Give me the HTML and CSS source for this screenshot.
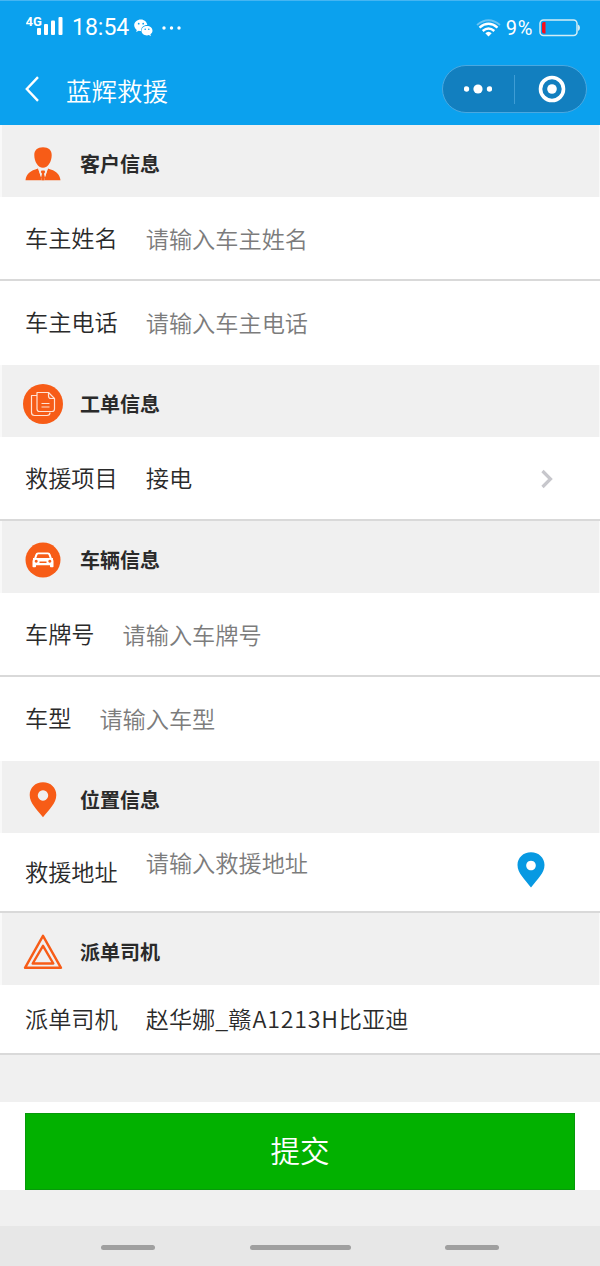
FILE: index.html
```html
<!DOCTYPE html>
<html lang="zh-CN">
<head>
  <meta charset="UTF-8">
  <meta name="viewport" content="width=device-width, initial-scale=1">
  <title>蓝辉救援</title>
  <link rel="stylesheet" href="styles.css">
</head>
<body>

  <header class="header">
    <div class="status">
      <svg class="signal" width="37" height="22" viewBox="0 0 37 22">
        <text x="-0.500" y="11" class="net">4G</text>
        <g fill="#fff">
          <rect x="11" y="13" width="4" height="7" rx="1"/>
          <rect x="18" y="9" width="4" height="11" rx="1"/>
          <rect x="25" y="5.500" width="4" height="14.500" rx="1"/>
          <rect x="32.500" y="2" width="4" height="18" rx="1"/>
        </g>
      </svg>
      <span class="time">18:54</span>
      <svg class="wechat" width="19" height="18" viewBox="0 0 19 18">
        <path fill="#fff" d="M7 .5C3.200.5.200 3 .200 6.300c0 1.900 1 3.500 2.600 4.600l-.7 2.200 2.600-1.300c.8.2 1.600.3 2.400.3C6.800 8.500 9.600 6 13.300 6 12.700 2.800 10.200.5 7 .5z"/>
        <path fill="#fff" d="M13 7c-3.100 0-5.500 2.100-5.500 4.700s2.400 4.700 5.500 4.700c.7 0 1.300-.1 1.900-.3l2 1.100-.5-1.900c1.300-.9 2.100-2.100 2.100-3.600C18.500 9.100 16.100 7 13 7z"/>
        <g fill="#0ba1ee">
          <circle cx="4.700" cy="4.700" r=".9"/><circle cx="9.200" cy="4.700" r=".9"/>
          <circle cx="11.200" cy="10.300" r=".8"/><circle cx="14.800" cy="10.300" r=".8"/>
        </g>
      </svg>
      <svg class="more" width="19" height="4" viewBox="0 0 19 4" fill="#fff">
        <circle cx="2" cy="2" r="1.700"/><circle cx="9.500" cy="2" r="1.700"/><circle cx="17" cy="2" r="1.700"/>
      </svg>
      <svg class="wifi" width="25" height="18" viewBox="0 0 25 18" fill="none" stroke="#fff" stroke-width="2.400">
        <path d="M1 6Q12.500-3.500 24 6" stroke="#66c2f3" stroke-width="1.800"/>
        <path d="M3.500 8.600Q12.500 1 21.500 8.600"/>
        <path d="M6.700 12Q12.500 7 18.300 12"/>
        <path d="M9.300 14.200Q12.500 11.200 15.700 14.200L12.500 17.500z" fill="#fff" stroke="none"/>
      </svg>
      <span class="percent">9%</span>
      <svg class="battery" width="41" height="18" viewBox="0 0 41 18">
        <rect x="1" y="1" width="37" height="15.500" rx="3.500" fill="none" stroke="#d3edf5" stroke-width="1.500"/>
        <path d="M39 5.500q2 1 2 3.300t-2 3.300z" fill="#d3edf5"/>
        <path d="M6.500 3v11.500H5Q3 14.500 3 12.500v-7.500Q3 3 5 3z" fill="#fb0d1b"/>
      </svg>
    </div>
    <div class="nav">
      <svg class="back" width="14" height="26" viewBox="0 0 14 26" fill="none" stroke="#fff" stroke-width="2.400">
        <path d="M13 1.200L1.800 13 13 24.800"/>
      </svg>
      <h1 class="title">蓝辉救援</h1>
      <div class="capsule">
        <svg width="28" height="10" viewBox="0 0 28 10" fill="#fff">
          <circle cx="2.500" cy="5" r="2.700"/><circle cx="14" cy="5" r="4.600"/><circle cx="25.500" cy="5" r="2.700"/>
        </svg>
        <span class="line"></span>
        <svg width="28" height="28" viewBox="0 0 28 28">
          <circle cx="14" cy="14" r="11.500" fill="none" stroke="#fff" stroke-width="3.600"/>
          <circle cx="14" cy="14" r="4.800" fill="#fff"/>
        </svg>
      </div>
    </div>
  </header>

  <form class="form">
    <h2 class="section">
      <svg class="icon" width="40" height="40" viewBox="0 0 40 40" fill="#f75c17">
        <path d="M20 3.200c5.600 0 8.700 2.800 8.700 7.800 0 6.500-3.600 12.800-8.700 12.800s-8.700-6.300-8.700-12.800c0-5 3.100-7.800 8.700-7.800z"/>
        <path d="M15 24.500l4 11.500h2l4-11.500c7.500 2.300 11.800 5 12.500 11.800h-35c.7-6.800 5-9.500 12.500-11.800z"/>
        <path d="M15.300 24.500q4.700 2.500 9.400 0l-3.700 11.800h-2z" fill="#f0f0f0"/>
        <path d="M18.500 26.500h3l.7 1.500-1.200 1.800 1 4-1 2.500h-2l-1-2.500 1-4-1.200-1.800z"/>
      </svg>
      客户信息
    </h2>
    <label class="row">车主姓名<input type="text" placeholder="请输入车主姓名"></label>
    <label class="row plain">车主电话<input type="text" placeholder="请输入车主电话"></label>

    <h2 class="section">
      <svg class="icon" width="40" height="40" viewBox="0 0 40 40">
        <circle cx="20" cy="20" r="20" fill="#f75c17"/>
        <g fill="none" stroke="#ffe2d3" stroke-width="1.200" stroke-linejoin="round">
          <path d="M14 11.500H8.500v17q0 3 3 3H24q3 0 3-3"/>
          <path d="M14 8.500h11.500l6 6V25q0 2.500-2.500 2.500H16.500Q14 27.500 14 25z"/>
          <path d="M25.500 8.500v3.500q0 2.500 2.500 2.500h3.500"/>
          <path d="M18.500 19.500h8M18.500 23h8"/>
        </g>
      </svg>
      工单信息
    </h2>
    <div class="row">
      救援项目<span class="value">接电</span>
      <svg class="arrow" width="14" height="20" viewBox="0 0 14 20" fill="none" stroke="#c7c7cc" stroke-width="3.200">
        <path d="M2.500 2l8 8-8 8"/>
      </svg>
    </div>

    <h2 class="section">
      <svg class="icon" width="40" height="40" viewBox="0 0 40 40">
        <circle cx="20" cy="20" r="17.500" fill="#f75c17"/>
        <path fill="#fff" fill-rule="evenodd" d="M15 12.500h10q2 0 2.600 2l1.200 3.500h1.200v1.500q.5.800.5 2v5q0 .7-.7.700h-2q-.8 0-.8-.8v-1.200H13v1.200q0 .8-.8.800h-2q-.7 0-.7-.7v-5q0-1.200.5-2V18h1.200l1.200-3.500q.6-2 2.600-2zm.3 1.800q-.7 0-1 .9L13.300 18h13.400l-1-2.800q-.3-.9-1-.9zM13.200 19.800a1.500 1.500 0 1 0 .01 0zM26.800 19.800a1.500 1.500 0 1 0 .01 0zM16.500 21.600v1.500h7v-1.500z"/>
      </svg>
      车辆信息
    </h2>
    <label class="row">车牌号<input type="text" placeholder="请输入车牌号"></label>
    <label class="row plain">车型<input type="text" placeholder="请输入车型"></label>

    <h2 class="section">
      <svg class="icon" width="40" height="40" viewBox="0 0 40 40">
        <path fill="#f75c17" fill-rule="evenodd" d="M20 2.300c-7.700 0-13.300 5.500-13.300 12.700C6.700 23 13.500 29 20 37.300 26.500 29 33.300 23 33.300 15 33.300 7.800 27.700 2.300 20 2.300zm0 8a5.200 5.200 0 1 1-.01 0z"/>
      </svg>
      位置信息
    </h2>
    <label class="row address">救援地址<textarea rows="1" placeholder="请输入救援地址"></textarea>
      <svg class="locate" width="28" height="36" viewBox="6 2 28 36">
        <path fill="#0799e2" fill-rule="evenodd" d="M20 2.300c-7.700 0-13.500 5.500-13.500 12.700C6.500 23 13.500 29 20 37.500 26.500 29 33.500 23 33.500 15 33.500 7.800 27.700 2.300 20 2.300zm0 8.400a4.800 4.800 0 1 1-.01 0z"/>
      </svg>
    </label>

    <h2 class="section">
      <svg class="icon" width="40" height="40" viewBox="0 0 40 40" fill="none" stroke="#f75c17" stroke-width="2.400" stroke-linejoin="round">
        <path d="M20 3.800L38 35.800H2z"/>
        <path d="M20 13.800L30.300 31.500H9.700z"/>
      </svg>
      派单司机
    </h2>
    <div class="row driver">派单司机<span class="value">赵华娜_赣<span class="plate">A1213H</span>比亚迪</span></div>

    <div class="gap"></div>
    <div class="submit">
      <button type="button" class="btn">提交</button>
    </div>
  </form>

  <footer class="keys">
    <span class="key"></span>
    <span class="key home"></span>
    <span class="key"></span>
  </footer>

</body>
</html>
```
FILE: styles.css
```css
* {
  box-sizing: border-box;
}
body {
  margin: 0;
  background-color: #f0f0f0;
  font-family: 'Noto Sans CJK SC', sans-serif;
  font-weight: 350;
  color: #2a2a2a;
}
svg {
  display: block;
  flex: none;
}

/* header */
.header {
  height: 125px;
  background-color: #0ba1ee;
  border-top: 1px solid #45b5f2;
  color: #fff;
}
.status {
  display: flex;
  align-items: center;
  height: 53px;
  padding: 0 20px 0 26px;
  font-family: Roboto, sans-serif;
  font-weight: 400;
}
.signal {
  margin-top: -4px;
}
.net {
  font: bold 13px Roboto, sans-serif;
  fill: #fff;
}
.time {
  margin-left: 9px;
  width: 58px;
  font-size: 23px;
}
.wechat {
  margin-left: 4px;
}
.more {
  margin-left: 9px;
}
.wifi {
  margin-left: auto;
}
.percent {
  margin: 0 6px 0 5px;
  font-size: 20px;
  letter-spacing: 0.7px;
}
.nav {
  display: flex;
  align-items: center;
  height: 71px;
  padding: 0 13px 1px 25px;
}
.title {
  margin: 2px auto 0 27px;
  font-size: 25.5px;
  font-weight: 350;
  line-height: 36px;
}
.capsule {
  display: flex;
  align-items: center;
  justify-content: space-between;
  width: 145px;
  height: 48px;
  padding: 0 20px 0 21px;
  border: 1px solid #4aa8e0;
  border-radius: 24px;
  background-color: #127fbf;
}
.line {
  width: 1px;
  height: 29px;
  margin-right: 1px;
  background-color: #3e9dd5;
}

/* form */
.section {
  display: flex;
  align-items: center;
  gap: 17px;
  height: 72px;
  margin: 0;
  padding: 5px 21px 0;
  border-left: 2px solid #f9f9f9;
  border-right: 1px solid #f9f9f9;
  font-size: 20px;
  font-weight: 700;
}
.row {
  display: flex;
  align-items: center;
  height: 84px;
  padding: 0 25px 2px;
  border-bottom: 2px solid #d9d9d9;
  background-color: #fff;
  font-size: 23.2px;
  white-space: nowrap;
}
.plain {
  border-bottom-color: #fff;
}
.row input, .row textarea {
  flex: 1;
  min-width: 0;
  height: 36px;
  margin: 2px 0 0 28px;
  padding: 0;
  border: 0;
  outline: 0;
  background: none;
  font: inherit;
  line-height: 36px;
  color: #222;
  resize: none;
  overflow: hidden;
}
.row input::placeholder, .row textarea::placeholder {
  color: #7c7c7c;
}
.value {
  margin-left: 28px;
}
.arrow {
  margin: 3px 21px 0 auto;
}
.address {
  height: 80px;
  padding-right: 55px;
}
.row.address textarea {
  margin-top: -19px;
}
.locate {
  margin-top: -3px;
}
.driver {
  height: 70px;
}
.plate {
  margin-left: 1px;
  letter-spacing: 0.8px;
}
.gap {
  height: 47px;
}
.submit {
  height: 88px;
  padding: 11px 25px 0;
  background-color: #fff;
}
.btn {
  display: block;
  width: 100%;
  height: 77px;
  padding: 0 0 5px;
  border: 1px solid #07990b;
  background-color: #02b100;
  font: inherit;
  font-size: 29.5px;
  color: #fff;
}

/* system keys */
.keys {
  display: flex;
  justify-content: space-between;
  align-items: center;
  height: 40px;
  margin-top: 36px;
  padding: 2px 101px 0;
  background-color: #e7e7e7;
}
.key {
  width: 54px;
  height: 5px;
  border-radius: 3px;
  background-color: #a0a0a0;
}
.home {
  width: 101px;
}
```
